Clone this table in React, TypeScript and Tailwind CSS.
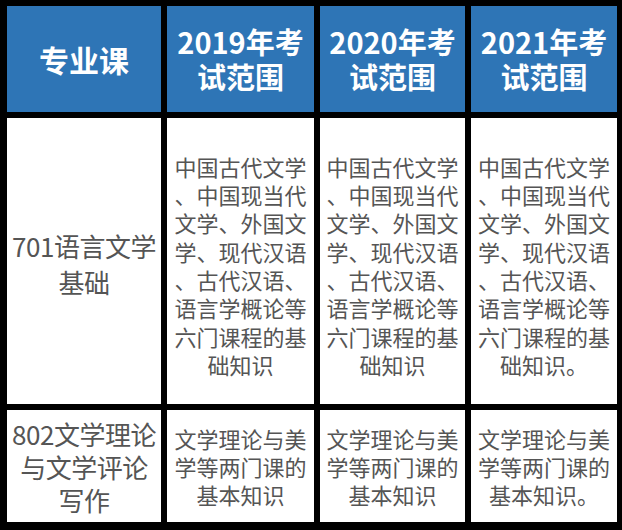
const font = { fontFamily: '"Noto Sans CJK SC", "Noto Sans", sans-serif' };

const headers = ['2019年考|试范围', '2020年考|试范围', '2021年考|试范围'];

const scope1 = [
  '中国古代文学',
  '、中国现当代',
  '文学、外国文',
  '学、现代汉语',
  '、古代汉语、',
  '语言学概论等',
  '六门课程的基',
  '础知识',
];

const scope2 = ['文学理论与美', '学等两门课的', '基本知识'];

function Lines({ lines, className }: { lines: string[]; className: string }) {
  return (
    <div className={className}>
      {lines.map((l, i) => (
        <div key={i} className="whitespace-nowrap">
          {l}
        </div>
      ))}
    </div>
  );
}

export default function App() {
  const withDot = (lines: string[]) => lines.map((l, i) => (i === lines.length - 1 ? l + '。' : l));

  return (
    <div
      className="w-[622px] h-[530px] bg-black pl-[7px] pt-[6px] text-[#555]"
      style={font}
    >
      <div className="grid grid-cols-[154px_147px_145px_146px] grid-rows-[106px_286px_112px] gap-x-[6px] gap-y-[6px]">
        <div className="bg-[#2e75b6] flex items-center justify-center text-white font-bold text-[30px]">
          专业课
        </div>
        {headers.map((h) => (
          <div
            key={h}
            className="bg-[#2e75b6] flex flex-col items-center justify-center text-white font-bold text-[29px] leading-[35px]"
          >
            {h.split('|').map((p) => (
              <div key={p} className="whitespace-nowrap">
                {p}
              </div>
            ))}
          </div>
        ))}

        <div className="bg-white flex items-center justify-center pt-[6px]">
          <Lines
            lines={['701语言文学', '基础']}
            className="text-[26px] leading-[36px] text-center tracking-[-0.5px]"
          />
        </div>
        <div className="bg-white flex items-center justify-center pt-[8px]">
          <Lines lines={scope1} className="text-[22px] leading-[28.3px] text-center" />
        </div>
        <div className="bg-white flex items-center justify-center pt-[8px]">
          <Lines lines={scope1} className="text-[22px] leading-[28.3px] text-center" />
        </div>
        <div className="bg-white flex items-center justify-center pt-[8px]">
          <Lines lines={withDot(scope1)} className="text-[22px] leading-[28.3px] text-center" />
        </div>

        <div className="bg-white flex items-center justify-center">
          <Lines
            lines={['802文学理论', '与文学评论', '写作']}
            className="text-[26px] leading-[33px] text-center tracking-[-0.5px]"
          />
        </div>
        <div className="bg-white flex items-center justify-center">
          <Lines lines={scope2} className="text-[22px] leading-[28px] text-center" />
        </div>
        <div className="bg-white flex items-center justify-center">
          <Lines lines={scope2} className="text-[22px] leading-[28px] text-center" />
        </div>
        <div className="bg-white flex items-center justify-center">
          <Lines lines={withDot(scope2)} className="text-[22px] leading-[28px] text-center" />
        </div>
      </div>
    </div>
  );
}
